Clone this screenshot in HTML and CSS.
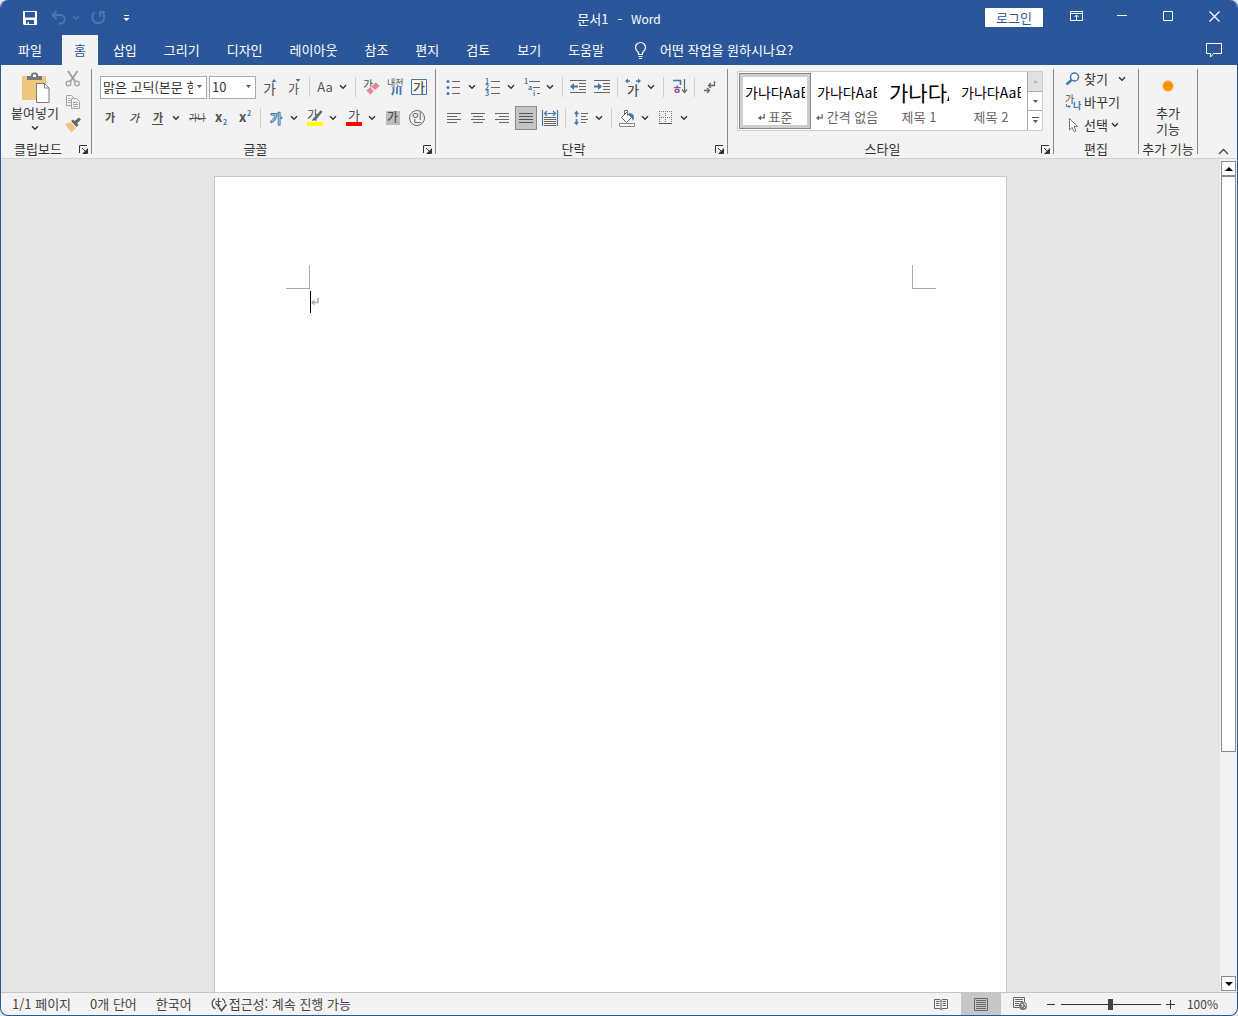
FILE: index.html
```html
<!DOCTYPE html>
<html lang="ko">
<head>
<meta charset="utf-8">
<meta name="viewport" content="width=device-width, initial-scale=1">
<title>문서1 - Word</title>
<link rel="stylesheet" href="styles.css">
</head>
<body>
<svg class="defs" width="0" height="0" aria-hidden="true">
  <symbol id="chev" viewBox="0 0 8 6"><path d="M1 1.200 4 4.200 7 1.200" fill="none" stroke="currentColor" stroke-width="1.400"/></symbol>
  <symbol id="tri" viewBox="0 0 7 4"><path d="M1 0h5L3.500 3z" fill="currentColor"/></symbol>
  <symbol id="launch" viewBox="0 0 9 9"><path d="M.5 8V.5H8M3 3l4 4M8.500 3.500v5h-5" fill="none" stroke="currentColor"/><path d="M8 4v4H4z" fill="currentColor"/></symbol>
  <symbol id="ret" viewBox="0 0 8 8"><path d="M7 0v4.500H2" fill="none" stroke="currentColor" stroke-width="1.500"/><path d="M0 4.500 3.500 1.500v6z" fill="currentColor"/></symbol>
</svg>
<div class="window">
  <header class="titlebar">
    <div class="quick">
      <button class="tb" aria-label="저장"><svg width="14" height="14" viewBox="0 0 14 14"><path fill="#fff" fill-rule="evenodd" d="M0 0h14v14H1L0 13zM2 1v5.500h10V1zM3 9v4h1.500v-2H6v2h5V9z"/></svg></button>
      <div class="pair dim">
        <button class="tb" aria-label="실행 취소"><svg width="15" height="15" viewBox="0 0 15 15"><path d="M5.500 1 1.500 5l4 4M2 5h7.500a4 4 0 0 1 0 8.500H8" fill="none" stroke="currentColor" stroke-width="2"/></svg></button>
        <button class="tb slim" aria-label="실행 취소 목록"><svg width="8" height="6"><use href="#chev"/></svg></button>
      </div>
      <button class="tb dim" aria-label="다시 실행"><svg width="15" height="15" viewBox="0 0 15 15"><path d="M4 2.200A6 6 0 1 0 11.500 3M9 7V2h5" fill="none" stroke="currentColor" stroke-width="2"/></svg></button>
      <button class="tb" aria-label="빠른 실행 도구 모음 사용자 지정"><svg width="7" height="8" viewBox="0 0 7 8"><path fill="#fff" d="M1 1h5v1H1zM.5 4h6l-3 3z"/></svg></button>
    </div>
    <h1 class="title"><span>문서1</span><span>-</span><span class="latin">Word</span></h1>
    <div class="sys">
      <button class="login">로그인</button>
      <button class="wb" aria-label="리본 메뉴 표시 옵션"><svg width="13" height="10" viewBox="0 0 13 10"><path d="M.5.5h12v9H.5zM.5 2.500h12M6.500 9V4M4.500 6l2-2 2 2" fill="none" stroke="#fff"/></svg></button>
      <button class="wb" aria-label="최소화"><svg width="10" height="10"><path d="M0 4.500h10" stroke="#fff"/></svg></button>
      <button class="wb" aria-label="최대화"><svg width="10" height="10"><path d="M.5.5h9v9h-9z" fill="none" stroke="#fff"/></svg></button>
      <button class="wb" aria-label="닫기"><svg width="11" height="11"><path d="M.5.5l10 10M10.500.5l-10 10" stroke="#fff" stroke-width="1.100"/></svg></button>
    </div>
  </header>

  <nav class="tabs" aria-label="리본 탭">
    <button class="tab file">파일</button>
    <button class="tab active">홈</button>
    <button class="tab">삽입</button>
    <button class="tab">그리기</button>
    <button class="tab">디자인</button>
    <button class="tab">레이아웃</button>
    <button class="tab">참조</button>
    <button class="tab">편지</button>
    <button class="tab">검토</button>
    <button class="tab">보기</button>
    <button class="tab">도움말</button>
    <button class="tellme"><svg width="13" height="17" viewBox="0 0 13 17"><path d="M4.500 12.500v-2C3 9 1.500 8 1.500 5.500a5 5 0 0 1 10 0C11.500 8 10 9 8.500 10.500v2zM4.500 14.500h4M5 16.500h3" fill="none" stroke="#fff" stroke-width="1.200"/></svg>어떤 작업을 원하시나요?</button>
    <button class="comment" aria-label="메모"><svg width="16" height="15" viewBox="0 0 16 15"><path d="M.5.5h15v10H7.500L4.500 14v-3.500h-4z" fill="none" stroke="#fff"/></svg></button>
  </nav>

  <div class="ribbon">
    <section class="group clip">
      <div class="body">
        <button class="paste">
          <svg width="29" height="31" viewBox="0 0 29 31"><path fill="#edc77d" d="M1 4h24v24H1z"/><path fill="#7a7a7a" d="M6 8V4h4V2l2-1.500h3L17 2v2h4v4z"/><path fill="#f3f3f3" d="M12 2.500h3V5h-3z"/><path fill="#fff" stroke="#7a7a7a" d="M15.500 11.500h8l4.500 4.500v14.500H15.500z"/><path d="M23.500 11.500V16H28" fill="none" stroke="#7a7a7a"/></svg>
          <span>붙여넣기</span>
          <svg width="8" height="6"><use href="#chev"/></svg>
        </button>
        <div class="stack">
          <button class="ib" aria-label="잘라내기"><svg width="16" height="16" viewBox="0 0 16 16"><path d="M3 0l7.500 11M12.500 0 5 11" stroke="#9c9c9c" stroke-width="1.800"/><g fill="none" stroke="#a4a4a4" stroke-width="1.300"><circle cx="3.500" cy="12.500" r="2.400"/><circle cx="12" cy="12.500" r="2.400"/></g></svg></button>
          <button class="ib" aria-label="복사"><svg width="16" height="16" viewBox="0 0 16 16"><g fill="#f3f3f3" stroke="#a4a4a4"><path d="M1.500 1.500h5l3 3v7h-8z"/><path d="M6.500 4.500h5l3 3v7h-8z"/></g><path d="M3 4.500h2M3 6.500h3M3 8.500h3M8 8.500h5M8 10.500h5M8 12.500h5" stroke="#a4a4a4"/></svg></button>
          <button class="ib" aria-label="서식 복사"><svg width="16" height="16" viewBox="0 0 16 16"><path fill="#edc77d" d="M0 7.500 5 5l6 6-4.500 4.500z"/><path fill="#666" d="m6 4 2-1.500L9.500 4l4.500-3.500L16 2.500 12 6.500 13.500 8l-2 2z"/></svg></button>
        </div>
      </div>
      <footer><h2>클립보드</h2><button class="launcher" aria-label="클립보드 옵션"><svg width="9" height="9"><use href="#launch"/></svg></button></footer>
    </section>

    <section class="group font">
      <div class="body rows">
        <div class="row">
          <div class="combo name"><select aria-label="글꼴"><option>맑은 고딕(본문 한글)</option></select><svg width="7" height="4"><use href="#tri"/></svg></div>
          <div class="combo size"><select aria-label="글꼴 크기"><option>10</option></select><svg width="7" height="4"><use href="#tri"/></svg></div>
          <button class="ib" aria-label="글꼴 크기 크게"><svg width="16" height="18" viewBox="0 0 16 18"><text x="1" y="16" font-size="14" class="gl">가</text><path fill="#4178b0" d="M9.500 4h5L12 1z"/></svg></button>
          <button class="ib" aria-label="글꼴 크기 작게"><svg width="16" height="18" viewBox="0 0 16 18"><text x="2" y="16" font-size="12" class="gl">가</text><path fill="#4178b0" d="M9.500 1h5L12 4z"/></svg></button>
          <i class="sep"></i>
          <div class="split"><button aria-label="대/소문자 바꾸기"><span class="aa">Aa</span></button><button aria-label="대/소문자 메뉴"><svg width="8" height="6"><use href="#chev"/></svg></button></div>
          <i class="sep"></i>
          <button class="ib" aria-label="모든 서식 지우기"><svg width="18" height="18" viewBox="0 0 18 18"><text x="1" y="11" font-size="11" class="gl">가</text><path fill="#e8879b" stroke="#f3f3f3" stroke-width=".6" d="m4 12.500 4-3.500 4 4-3.500 4zM9 8.500l5-4.500 4 4-5 4.500z"/></svg></button>
          <button class="ib" aria-label="윗주 달기"><svg width="18" height="18" viewBox="0 0 18 18"><text x="1" y="8" font-size="9" class="gl">내천</text><path d="M7.500 9v5l-1.500 3M11 9v7M14.500 9v8" fill="none" stroke="#4178b0" stroke-width="1.800"/></svg></button>
          <button class="ib" aria-label="문자 테두리"><svg width="16" height="16" viewBox="0 0 16 16"><path d="M.5.5h15v15H.5z" fill="#f8f8f8" stroke="#4178b0"/><text x="2" y="13" font-size="13" class="gl b">가</text></svg></button>
        </div>
        <div class="row">
          <button class="ib" aria-label="굵게"><svg width="12" height="14"><text x="1" y="11" font-size="11" class="gl bb">가</text></svg></button>
          <button class="ib" aria-label="기울임꼴"><svg width="12" height="14"><text x="1" y="11" font-size="11" class="gl it">가</text></svg></button>
          <div class="split"><button aria-label="밑줄"><svg width="12" height="14"><text x="1" y="11" font-size="11" class="gl bb">가</text><path d="M0 13.500h11" stroke="#505050"/></svg></button><button aria-label="밑줄 메뉴"><svg width="8" height="6"><use href="#chev"/></svg></button></div>
          <button class="ib" aria-label="취소선"><svg width="17" height="12" viewBox="0 0 17 12"><text x="0" y="9" font-size="9" class="gl">가나</text><path d="M0 6.500h17" stroke="#505050"/></svg></button>
          <button class="ib" aria-label="아래 첨자"><svg width="14" height="16"><text x="1" y="12" font-size="13" class="gl bb">x</text><text x="9" y="15" font-size="7" class="gl bl">2</text></svg></button>
          <button class="ib" aria-label="위 첨자"><svg width="14" height="16"><text x="1" y="12" font-size="13" class="gl bb">x</text><text x="9" y="6" font-size="7" class="gl bl">2</text></svg></button>
          <i class="sep"></i>
          <div class="split"><button aria-label="텍스트 효과"><svg width="16" height="16"><text x="2" y="13" font-size="13" class="gl fx">가</text></svg></button><button aria-label="텍스트 효과 메뉴"><svg width="8" height="6"><use href="#chev"/></svg></button></div>
          <div class="split"><button aria-label="텍스트 강조 색"><svg width="18" height="18" viewBox="0 0 18 18"><path fill="#ff0" d="M1 13h16v4H1z"/><text x="1" y="11" font-size="12" class="gl">가</text><path d="m15.500 2-6 7.500" stroke="#666" stroke-width="2.600"/><path fill="#666" d="m8 8 3 2.500-5.500 1.500z"/></svg></button><button aria-label="강조 색 메뉴"><svg width="8" height="6"><use href="#chev"/></svg></button></div>
          <div class="split"><button aria-label="글꼴 색"><svg width="18" height="18" viewBox="0 0 18 18"><path fill="#f00" d="M1 13h16v4H1z"/><text x="3" y="11" font-size="13" class="gl">가</text></svg></button><button aria-label="글꼴 색 메뉴"><svg width="8" height="6"><use href="#chev"/></svg></button></div>
          <button class="ib" aria-label="문자 음영"><svg width="14" height="14"><path fill="#bdbdbd" d="M0 0h14v14H0z"/><text x="1" y="11" font-size="12" class="gl b">가</text></svg></button>
          <button class="ib" aria-label="원 문자"><svg width="18" height="18" viewBox="0 0 18 18"><circle cx="9" cy="9" r="7.500" fill="none" stroke="#666"/><text x="4" y="13" font-size="11" class="gl">인</text></svg></button>
        </div>
      </div>
      <footer><h2>글꼴</h2><button class="launcher" aria-label="글꼴 옵션"><svg width="9" height="9"><use href="#launch"/></svg></button></footer>
    </section>

    <section class="group para">
      <div class="body rows">
        <div class="row">
          <div class="split"><button aria-label="글머리 기호"><svg width="16" height="16" viewBox="0 0 16 16"><path d="M6 2.500h8M6 8.500h8M6 14.500h8" stroke="#666"/><g fill="#4178b0"><circle cx="2" cy="2.500" r="1.500"/><circle cx="2" cy="8.500" r="1.500"/><circle cx="2" cy="14.500" r="1.500"/></g></svg></button><button aria-label="글머리 기호 메뉴"><svg width="8" height="6"><use href="#chev"/></svg></button></div>
          <div class="split"><button aria-label="번호 매기기"><svg width="16" height="18" viewBox="0 0 16 18"><path d="M6 3.500h9M6 9.500h9M6 15.500h9" stroke="#666"/><g font-size="7" class="num"><text x="0" y="6">1</text><text x="0" y="12">2</text><text x="0" y="18">3</text></g></svg></button><button aria-label="번호 메뉴"><svg width="8" height="6"><use href="#chev"/></svg></button></div>
          <div class="split"><button aria-label="다단계 목록"><svg width="18" height="18" viewBox="0 0 18 18"><path d="M6 3.500h11M10 9.500h7M14 15.500h3" stroke="#666"/><g font-size="7" class="num"><text x="1" y="6">1</text><text x="5" y="12">a</text><text x="10" y="18">i</text></g></svg></button><button aria-label="다단계 메뉴"><svg width="8" height="6"><use href="#chev"/></svg></button></div>
          <i class="sep"></i>
          <button class="ib" aria-label="내어쓰기"><svg width="16" height="14" viewBox="0 0 16 14"><path d="M0 .5h16M9 3.500h7M9 6.500h7M9 9.500h7M0 12.500h16" stroke="#666"/><path d="M8 6.500H2" stroke="#4178b0" stroke-width="2"/><path fill="#4178b0" d="M0 6.500 4 3v7z"/></svg></button>
          <button class="ib" aria-label="들여쓰기"><svg width="16" height="14" viewBox="0 0 16 14"><path d="M0 .5h16M9 3.500h7M9 6.500h7M9 9.500h7M0 12.500h16" stroke="#666"/><path d="M0 6.500h6" stroke="#4178b0" stroke-width="2"/><path fill="#4178b0" d="M8 6.500 4 3v7z"/></svg></button>
          <i class="sep"></i>
          <div class="split"><button aria-label="한글 입력 체계"><svg width="18" height="18" viewBox="0 0 18 18"><text x="3" y="17" font-size="13" class="gl b">가</text><path d="M3 3h3M12 3h3" stroke="#4178b0" stroke-width="1.400"/><path fill="#4178b0" d="M1 3 4 .5v5zM17 3 14 .5v5z"/></svg></button><button aria-label="한글 입력 체계 메뉴"><svg width="8" height="6"><use href="#chev"/></svg></button></div>
          <i class="sep"></i>
          <button class="ib" aria-label="정렬"><svg width="16" height="18" viewBox="0 0 16 18"><path d="M2 2.500h7.500V7" fill="none" stroke="#4178b0" stroke-width="1.600"/><text x="1" y="16" font-size="11" class="gl pu">ㅎ</text><path d="M13.500 1v13M11 11.500l2.500 3 2.500-3" fill="none" stroke="#666" stroke-width="1.200"/></svg></button>
          <i class="sep"></i>
          <button class="ib" aria-label="편집 기호 표시"><svg width="14" height="14" viewBox="0 0 14 14"><path d="M11.500 1v4.500H6M8 3 5.500 5.500 8 8M1 10.500h5M4 8l2.500 2.500L4 13" fill="none" stroke="#666" stroke-width="1.300"/></svg></button>
        </div>
        <div class="row">
          <button class="ib" aria-label="왼쪽 맞춤"><svg width="14" height="12"><path d="M0 1.500h14M0 4.500h10M0 7.500h14M0 10.500h10" stroke="#666"/></svg></button>
          <button class="ib" aria-label="가운데 맞춤"><svg width="14" height="12"><path d="M0 1.500h14M2 4.500h10M0 7.500h14M2 10.500h10" stroke="#666"/></svg></button>
          <button class="ib" aria-label="오른쪽 맞춤"><svg width="14" height="12"><path d="M0 1.500h14M4 4.500h10M0 7.500h14M4 10.500h10" stroke="#666"/></svg></button>
          <button class="ib on" aria-label="양쪽 맞춤" aria-pressed="true"><svg width="14" height="12"><path d="M0 1.500h14M0 4.500h14M0 7.500h14M0 10.500h14" stroke="#555"/></svg></button>
          <button class="ib" aria-label="균등 분할"><svg width="16" height="16" viewBox="0 0 16 16"><path d="M.5 0v16M15.500 0v16M3 3.500h10M5 1 2.500 3.500 5 6M11 1l2.500 2.500L11 6" fill="none" stroke="#4178b0" stroke-width="1.200"/><path d="M2 7.500h12M2 9.500h12M2 11.500h12M2 13.500h12M2 15.500h12" stroke="#666"/></svg></button>
          <i class="sep"></i>
          <div class="split"><button aria-label="줄 간격"><svg width="16" height="16" viewBox="0 0 16 16"><path d="M3.500 2v12" stroke="#4178b0" stroke-width="1.600" stroke-dasharray="5 2"/><path fill="#4178b0" d="M1 4h5L3.500.5zM1 12h5l-2.500 3.500z"/><path d="M8 3.500h7M8 6.500h5M8 9.500h7M8 12.500h5" stroke="#666"/></svg></button><button aria-label="줄 간격 메뉴"><svg width="8" height="6"><use href="#chev"/></svg></button></div>
          <i class="sep"></i>
          <div class="split"><button aria-label="음영"><svg width="18" height="18" viewBox="0 0 18 18"><path fill="#4178b0" d="M11 4c5 0 6 4 4 8-1-3-2-4-4-5z"/><path d="m3.500 8.500 5-5 5 5-5 5zM6.500 5.500V1.500h3v5" fill="#fff" stroke="#666"/><path d="M1.500 14.500h15v3h-15z" fill="#fff" stroke="#888"/></svg></button><button aria-label="음영 메뉴"><svg width="8" height="6"><use href="#chev"/></svg></button></div>
          <div class="split"><button aria-label="테두리"><svg width="14" height="14" viewBox="0 0 14 14"><path d="M0 .5h14M0 6.500h14M.5 0v12M6.500 0v12M12.500 0v12" stroke="#777" stroke-dasharray="1 1"/><path d="M0 12.500h13" stroke="#555"/></svg></button><button aria-label="테두리 메뉴"><svg width="8" height="6"><use href="#chev"/></svg></button></div>
        </div>
      </div>
      <footer><h2>단락</h2><button class="launcher" aria-label="단락 옵션"><svg width="9" height="9"><use href="#launch"/></svg></button></footer>
    </section>

    <section class="group styles">
      <div class="body">
        <div class="gallery">
          <button class="style sel"><span class="sample">가나다AaBb</span><span class="sname"><svg width="7" height="7"><use href="#ret"/></svg>표준</span></button>
          <button class="style"><span class="sample">가나다AaBb</span><span class="sname"><svg width="7" height="7"><use href="#ret"/></svg>간격 없음</span></button>
          <button class="style"><span class="sample big">가나다AaBb</span><span class="sname">제목 1</span></button>
          <button class="style"><span class="sample">가나다AaBb</span><span class="sname">제목 2</span></button>
          <div class="gscroll">
            <button class="off" aria-label="이전 스타일"><svg width="5" height="3" viewBox="0 0 5 3"><path d="M0 3h5L2.500 0z" fill="#b4b4b4"/></svg></button>
            <button aria-label="다음 스타일"><svg width="5" height="3"><path d="M0 0h5L2.500 3z" fill="#555"/></svg></button>
            <button aria-label="스타일 더 보기"><svg width="7" height="7"><path d="M0 0h7v1H0zM1 3h5L3.500 6z" fill="#555"/></svg></button>
          </div>
        </div>
      </div>
      <footer><h2>스타일</h2><button class="launcher" aria-label="스타일 옵션"><svg width="9" height="9"><use href="#launch"/></svg></button></footer>
    </section>

    <section class="group edit">
      <div class="body list">
        <button class="li"><svg width="16" height="16" viewBox="0 0 16 16"><circle cx="9.500" cy="6" r="4" fill="#fff" stroke="#4178b0" stroke-width="1.500"/><path d="M6.500 9 1.500 13.500" stroke="#4178b0" stroke-width="2.400"/></svg>찾기<svg class="far" width="8" height="6"><use href="#chev"/></svg></button>
        <button class="li"><svg width="16" height="16" viewBox="0 0 16 16"><text x="0" y="9" font-size="10" class="gl">가</text><text x="8" y="15" font-size="9" class="gl bl">나</text><path d="M1.500 10v2.500H5M3.500 11l1.500 1.500L3.500 14" fill="none" stroke="#4178b0"/></svg>바꾸기</button>
        <button class="li"><svg width="16" height="16" viewBox="0 0 16 16"><path d="M4.500 1.500v11.500l2.600-2.600 2 4.200 1.900-.9-2-4.200h3.500z" fill="#fff" stroke="#777"/></svg>선택<svg width="8" height="6"><use href="#chev"/></svg></button>
      </div>
      <footer class="plain"><h2>편집</h2></footer>
    </section>

    <section class="group addin">
      <div class="body">
        <button class="addbtn"><svg width="16" height="16" viewBox="0 0 16 16"><circle cx="8" cy="8" r="6" fill="#ffcf87"/><circle cx="8" cy="8" r="4.800" fill="#ff8f00"/></svg><span>추가<br>기능</span></button>
      </div>
      <footer class="plain"><h2>추가 기능</h2></footer>
    </section>
    <button class="collapse" aria-label="리본 메뉴 축소"><svg width="11" height="7" viewBox="0 0 11 7"><path d="M1 6 5.500 1.500 10 6" fill="none" stroke="#444" stroke-width="1.300"/></svg></button>
  </div>

  <div class="work">
    <main class="canvas">
      <article class="page">
        <div class="marks"><i class="mark l"></i><i class="mark r"></i></div>
        <div class="text" role="textbox" aria-label="문서 본문" contenteditable="true"><span class="caret"></span><svg width="8" height="8"><use href="#ret"/></svg></div>
      </article>
    </main>
    <div class="vscroll">
      <button aria-label="위로 스크롤"><svg width="8" height="4"><path d="M0 4h8L4 0z"/></svg></button>
      <div class="track"><div class="thumb"></div></div>
      <button aria-label="아래로 스크롤"><svg width="8" height="4"><path d="M0 0h8L4 4z"/></svg></button>
    </div>
  </div>

  <footer class="status">
    <button>1/1 페이지</button>
    <button>0개 단어</button>
    <button>한국어</button>
    <button class="acc"><svg width="16" height="16" viewBox="0 0 16 16"><path d="M4 2.500A6 6 0 0 0 4.500 13M11 2.500a6 6 0 0 1 3 5M7.500 2v8M4.500 7l3 3.500 1.500-1.500M4.500 5.500h6" fill="none" stroke="#555" stroke-width="1.200"/><path d="m8 11.500 2.500 3 5-6" fill="none" stroke="#555" stroke-width="1.800"/></svg>접근성: 계속 진행 가능</button>
    <div class="views">
      <button class="view" aria-label="읽기 모드"><svg width="14" height="13" viewBox="0 0 14 13"><path d="M.5 1.500H6L7 2.500l1-1h5.500v9H8l-1 1-1-1H.5zM7 2v10M2 3.500h3.500M2 5.500h3.500M2 7.500h3.500M8.500 3.500H12M8.500 5.500H12M8.500 7.500H12" fill="none" stroke="#666"/></svg></button>
      <button class="view on" aria-label="인쇄 모양" aria-pressed="true"><svg width="14" height="13" viewBox="0 0 14 13"><path d="M.5.5h13v12H.5zM2 2.500h10M2 4.500h10M2 6.500h10M2 8.500h10M2 10.500h10" fill="none" stroke="#666"/></svg></button>
      <button class="view" aria-label="웹 모양"><svg width="15" height="14" viewBox="0 0 15 14"><path d="M6 10.500H.5V.5h11V5M2 2.500h8M2 4.500h8M2 6.500h4M2 8.500h4" fill="none" stroke="#666"/><circle cx="10" cy="9" r="4" fill="#777"/><path d="M8 7l2 1-1 2M11 6l1 2 1.500 1M11 11l1-1" fill="none" stroke="#eee"/></svg></button>
    </div>
    <div class="zoom">
      <button aria-label="축소"><svg width="9" height="9"><path d="M0 4.500h8" stroke="#333"/></svg></button>
      <input type="range" min="0" max="100" value="50" aria-label="확대/축소">
      <button aria-label="확대"><svg width="9" height="9"><path d="M0 4.500h9M4.500 0v9" stroke="#333"/></svg></button>
      <button class="pct">100%</button>
    </div>
  </footer>
</div>
</body>
</html>
```
FILE: styles.css
```css
* { box-sizing: border-box; }
body {
  margin: 0;
  background: #e4e6ea;
  font: 13px/16px "Noto Sans CJK KR", "Noto Sans", sans-serif;
  color: #333;
}
button, select, input { font: inherit; color: inherit; margin: 0; }
button {
  display: flex; align-items: center; justify-content: center;
  border: 0; padding: 0; background: none; white-space: nowrap;
}
h1, h2 { margin: 0; font: inherit; }
svg { display: block; flex: none; overflow: visible; }
.defs { position: absolute; }

.window {
  display: flex; flex-direction: column;
  height: 100vh; overflow: hidden;
  border: 1px solid #2b579a; border-top: 0; border-radius: 8px;
  background: #f3f3f3;
}

/* Title bar */
.titlebar {
  display: grid; grid-template-columns: 1fr auto 1fr;
  height: 35px; flex: none; background: #2b579a; color: #fff;
}
.quick { display: flex; align-items: center; gap: 4px; padding-left: 17px; }
.tb { width: 24px; height: 24px; }
.tb.slim { width: 12px; }
.pair { display: flex; }
.dim { color: #4a76b4; }
.title { display: flex; align-items: center; gap: 9px; padding-top: 2px; }
.latin { font-size: 12px; }
.sys { display: flex; justify-content: flex-end; }
.login {
  width: 58px; height: 19px; margin: 8px 10px 0 0;
  background: #fff; color: #2b579a; border-radius: 1px;
}
.wb { width: 46px; height: 32px; }

/* Tabs */
.tabs { display: flex; gap: 3px; height: 30px; flex: none; padding-left: 5px; background: #2b579a; color: #fff; }
.tab { padding: 0 12px; }
.tab.file { margin-right: 5px; }
.tab.active { background: #f3f3f3; color: #2b579a; }
.tellme { gap: 13px; margin-left: 15px; }
.comment { width: 32px; margin: 0 7px 0 auto; }

/* Ribbon */
.ribbon { display: flex; height: 94px; flex: none; padding-top: 4px; border-bottom: 1px solid #d2d2d2; }
.group { display: flex; flex-direction: column; flex: none; height: 85px; border-right: 1px solid #8a8a8a; }
.clip { width: 91px; }
.font { width: 344px; }
.para { width: 292px; }
.styles { width: 326px; }
.edit { width: 85px; }
.addin { width: 59px; }
.body { display: flex; height: 75px; flex: none; }
.group footer { display: grid; grid-template-columns: 1fr 16px; height: 10px; align-items: center; }
.group footer.plain { grid-template-columns: 1fr; }
.group h2 { line-height: 10px; white-space: nowrap; justify-self: center; }
.launcher { width: 9px; height: 9px; margin-left: 4px; }

.paste { flex-direction: column; justify-content: flex-start; width: 50px; height: 66px; margin: 3px 0 0 9px; }
.paste span { line-height: 18px; }
.paste svg + span { margin-top: 1px; }
.paste span + svg { margin-top: 3px; }
.stack { display: flex; flex-direction: column; gap: 7px; padding: 2px 0 0 1px; }
.stack .ib { height: 16px; }

.rows { flex-direction: column; gap: 7px; padding: 6px 0 0 6px; }
.row { display: flex; align-items: center; height: 24px; }
.ib { width: 24px; height: 24px; flex: none; }
.ib.on { width: 22px; margin: 0 1px; border: 1px solid #8a8a8a; background: #c5c5c5; }
.split { display: flex; width: 35px; height: 24px; margin: 0 2px; }
.split button { width: 20px; }
.split button + button { width: 15px; }
.sep { width: 1px; height: 20px; margin: 0 3px; background: #d0d0d0; }
.combo { display: flex; align-items: center; height: 23px; margin-right: 2px; padding-right: 3px; border: 1px solid #ababab; background: #fff; color: #555; }
.combo.name { width: 107px; margin-left: 2px; }
.combo.size { width: 47px; }
.combo select {
  flex: 1; min-width: 0; height: 21px; padding: 0 0 0 2px; margin-right: 3px;
  appearance: none; border: 0; background: none; color: #333; text-overflow: clip;
}
.aa { color: #555; }

/* Letter glyphs inside icons */
.gl { fill: #505050; }
.b { font-weight: 500; }
.bb { font-weight: 700; }
.it { font-style: italic; font-weight: 500; }
.bl { fill: #4178b0; font-weight: 700; }
.pu { fill: #8a4fa5; font-weight: 700; }
.fx { fill: #fff; stroke: #4178b0; stroke-width: 1px; font-weight: 700; }
.num { fill: #4178b0; font-weight: 700; }

.gallery { display: flex; height: 60px; margin: 2px 0 0 9px; padding: 1px 0 1px 1px; border: 1px solid #d0d0d0; background: #fff; }
.style { flex-direction: column; width: 72px; padding-top: 2px; }
.style.sel { border: 1px solid #888; box-shadow: inset 0 0 0 3px #d0cecc; }
.sample { width: 60px; height: 30px; overflow: hidden; font-size: 14px; line-height: 30px; text-align: left; color: #000; }
.sample.big { font-size: 21px; }
.sname { display: flex; align-items: center; gap: 4px; height: 20px; color: #666; }
.gscroll { display: flex; flex-direction: column; width: 15px; margin: -1px 0; border-left: 1px solid #ababab; }
.gscroll button { flex: 1; }
.gscroll button + button { border-top: 1px solid #ababab; }
.gscroll .off { background: #e1e1e1; }

.list { flex-direction: column; align-items: flex-start; gap: 7px; padding: 2px 0 0 11px; }
.li { height: 16px; gap: 3px; }
.far { margin-left: 7px; }
.addbtn { flex-direction: column; width: 58px; margin-top: 9px; justify-content: flex-start; gap: 11px; }
.collapse { width: 20px; height: 14px; margin: auto 4px 0 auto; }

/* Document area */
.work { display: flex; flex: 1; min-height: 0; background: #e6e6e6; }
.canvas { display: flex; justify-content: center; flex: 1; padding-top: 17px; overflow: hidden; }
.page { width: 793px; padding: 88px 70px 0 71px; border: 1px solid #c6c6c6; border-bottom: 0; background: #fff; }
.marks { display: flex; justify-content: space-between; }
.mark { width: 24px; height: 24px; border-bottom: 1px solid #aaa; }
.mark.l { border-right: 1px solid #aaa; }
.mark.r { border-left: 1px solid #aaa; }
.text { display: flex; align-items: center; margin: 2px 24px 0; outline: 0; color: #aaa; }
.caret { width: 1px; height: 22px; background: #000; }

.vscroll { display: flex; flex-direction: column; width: 17px; padding: 2px 1px 1px; background: #f3f3f3; }
.vscroll button { height: 15px; border: 1px solid #8a8a8a; background: #fff; }
.track { flex: 1; }
.thumb { height: 72%; border: 1px solid #8a8a8a; background: #fff; }

/* Status bar */
.status { display: flex; height: 23px; flex: none; padding-left: 11px; border-top: 1px solid #c6c6c6; color: #444; }
.status > button { margin-right: 19px; }
.status .acc { gap: 2px; margin-right: 0; }
.views { display: flex; margin-left: auto; }
.view { width: 40px; }
.view.on { background: #c6c6c6; }
.zoom { display: flex; align-items: center; margin-left: 6px; padding-right: 19px; }
.zoom input {
  width: 100px; height: 12px; margin: 0 5px;
  appearance: none; background: linear-gradient(#333, #333) center / 100% 1px no-repeat;
}
.zoom input::-webkit-slider-thumb { appearance: none; width: 5px; height: 11px; background: #444; }
.pct { margin-left: 12px; font-size: 12px; }
```
